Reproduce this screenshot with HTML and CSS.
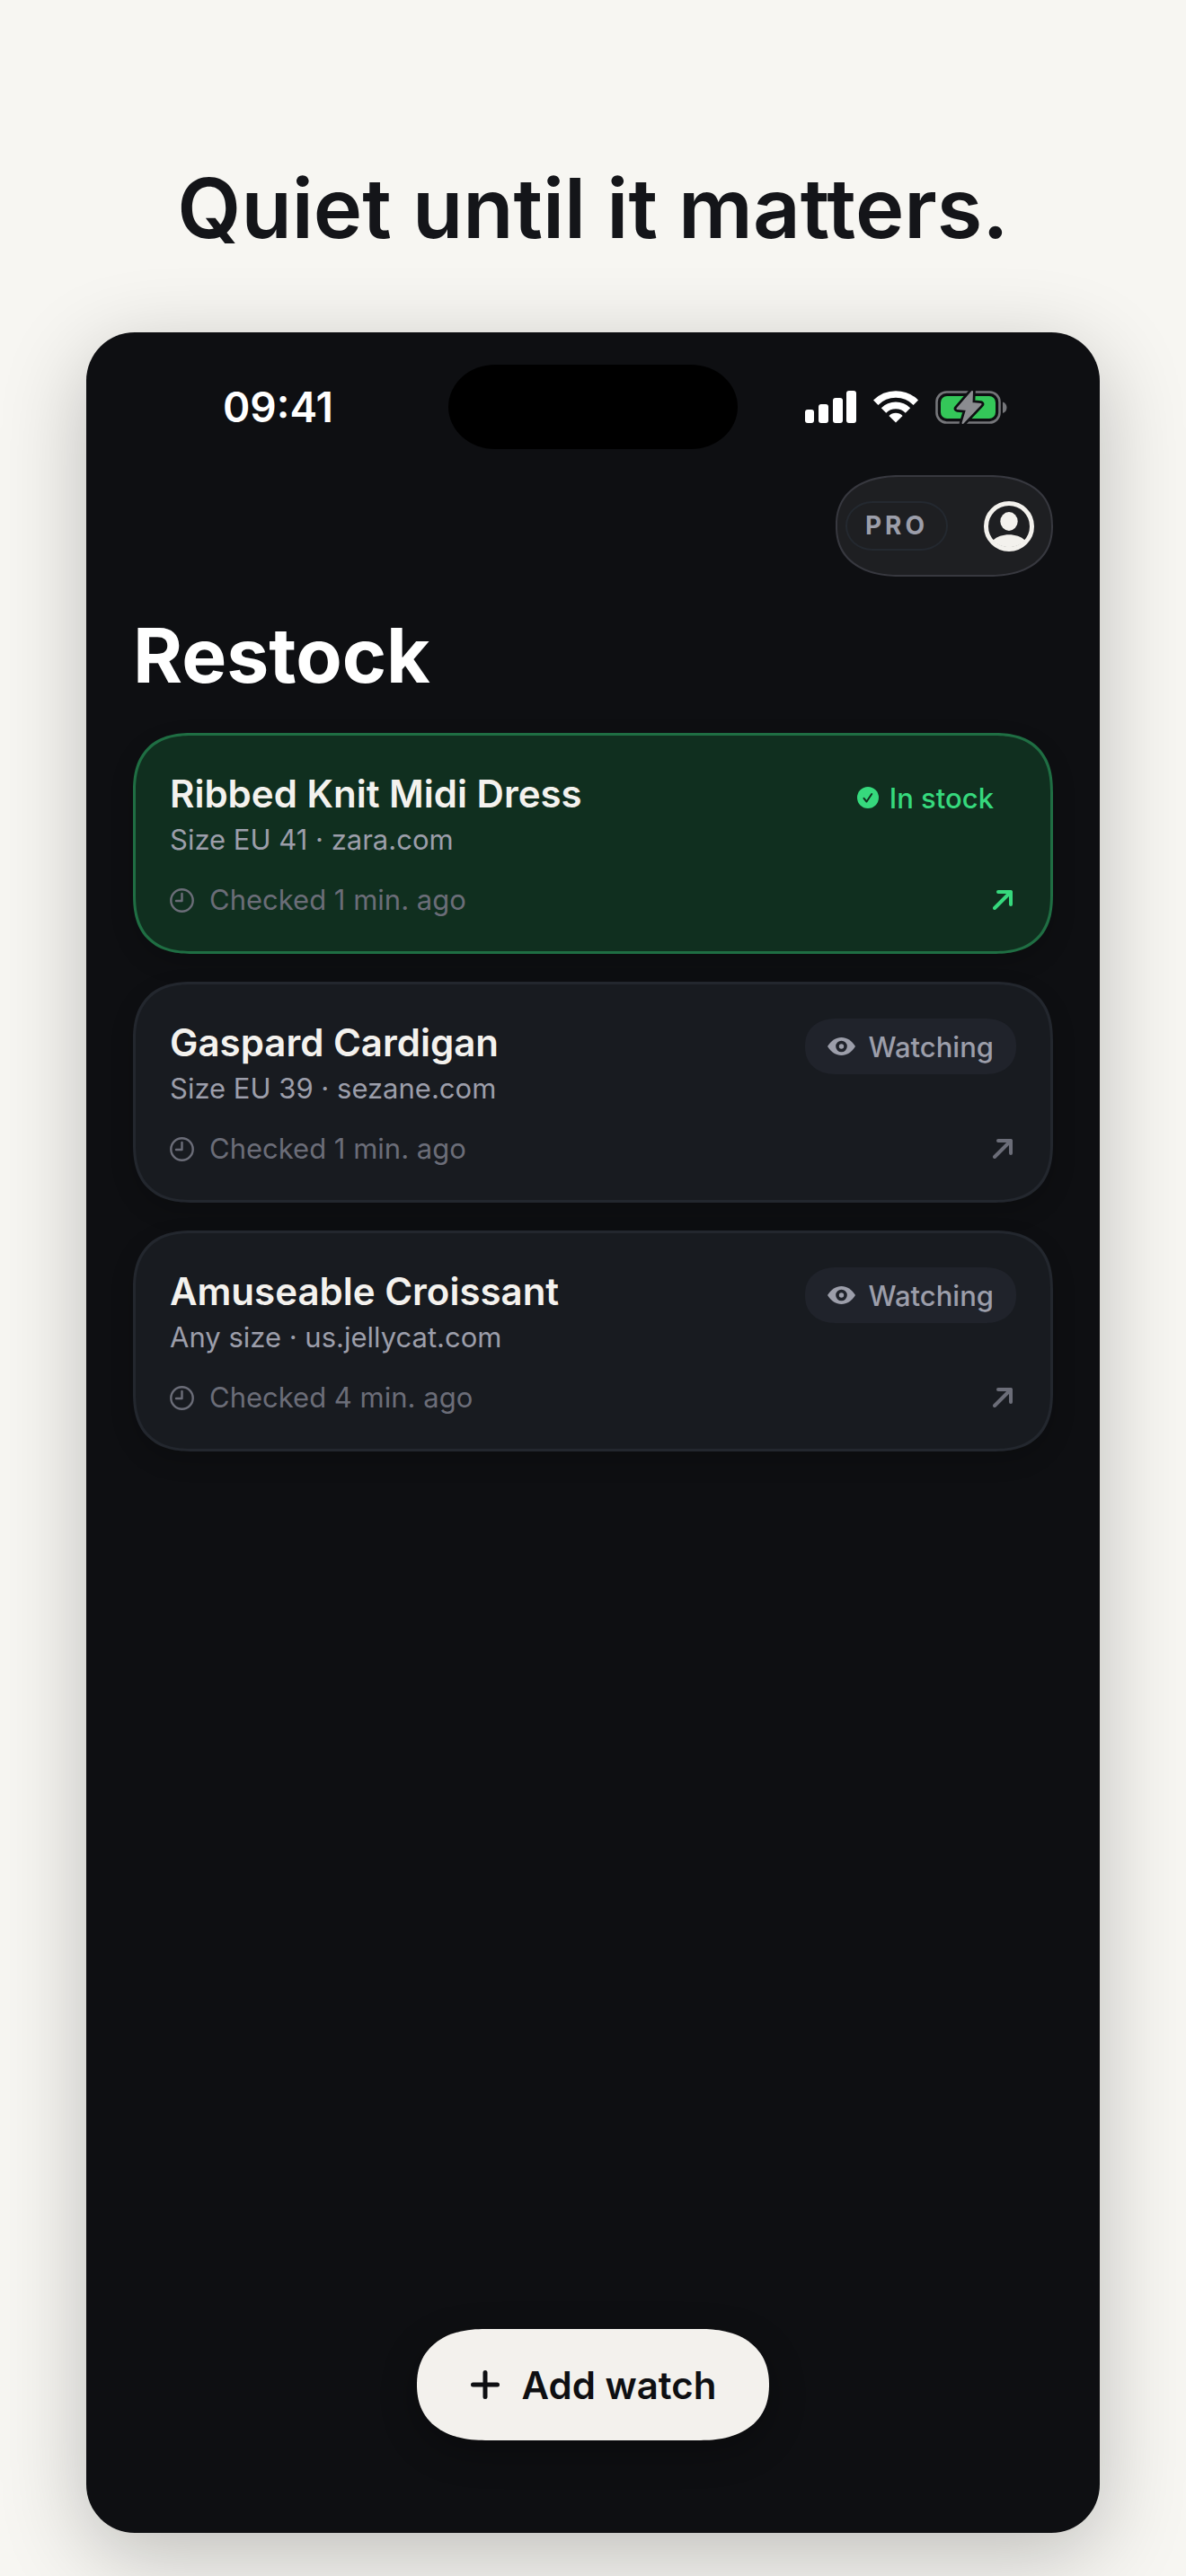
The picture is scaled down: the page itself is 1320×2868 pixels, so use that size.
FILE: index.html
```html
<!DOCTYPE html>
<html lang="en">
<head>
<meta charset="UTF-8">
<meta name="viewport" content="width=device-width, initial-scale=1.0">
<title>Restock</title>
<link rel="stylesheet" href="styles.css">
</head>
<body>
<h1 class="headline">Quiet until it matters.</h1>

<main class="phone">
    <div class="status-bar">
        <div class="time">09:41</div>
        <div class="island"></div>
        <div class="status-icons">
            <svg width="57" height="36" viewBox="0 0 57 36" fill="#fff">
                <rect x="0" y="21" width="10" height="15" rx="3"/>
                <rect x="15" y="15" width="11" height="21" rx="3"/>
                <rect x="31" y="8" width="11" height="28" rx="3"/>
                <rect x="46" y="0" width="11" height="36" rx="3"/>
            </svg>
            <svg width="50" height="36" viewBox="0 0 50 36" fill="none" stroke="#fff" stroke-width="7.7">
                <path d="M2.7 13.2a31.6 31.6 0 0 1 44.6 0"/>
                <path d="M11.5 22a19.1 19.1 0 0 1 27 0"/>
                <path d="M25 35.5l-7.6-7.6a10.7 10.7 0 0 1 15.2 0z" fill="#fff" stroke="none"/>
            </svg>
            <svg width="80" height="37" viewBox="0 0 80 37">
                <rect x="1.5" y="1.5" width="70" height="34" rx="11" fill="none" stroke="#75767a" stroke-width="2.6"/>
                <path d="M75 12.5c6 1.5 6 11 0 12.5z" fill="#75767a"/>
                <rect x="6" y="6" width="61" height="25" rx="7" fill="#34c759"/>
                <path d="M41 1L24.500 20l10.500 1L30.500 36 50.500 15l-10-1z" fill="#0e0f12" stroke="#0e0f12" stroke-width="7.5" stroke-linejoin="round"/>
                <path d="M41 1L24.500 20l10.500 1L30.500 36 50.500 15l-10-1z" fill="#8b8c90" stroke="#8b8c90" stroke-width="2" stroke-linejoin="round"/>
            </svg>
        </div>
    </div>

    <div class="toolbar">
        <div class="account">
            <span class="pro">PRO</span>
            <button class="avatar" aria-label="Account">
                <svg width="56" height="56" viewBox="0 0 56 56">
                    <circle cx="28" cy="28" r="25.5" fill="none" stroke="#f3f1ed" stroke-width="5"/>
                    <ellipse cx="28" cy="22.5" rx="9.7" ry="10.4" fill="#f3f1ed"/>
                    <path d="M10 43.500c9-8.500 27-8.500 36 0a25 25 0 0 1-36 0z" fill="#f3f1ed"/>
                </svg>
            </button>
        </div>
    </div>

    <h2 class="title">Restock</h2>

    <ul class="watches">
        <li class="card card-instock">
            <div class="row">
                <div class="info">
                    <h3>Ribbed Knit Midi Dress</h3>
                    <p>Size EU 41 · zara.com</p>
                </div>
                <span class="badge badge-instock">
                    <svg width="24" height="24" viewBox="0 0 24 24">
                        <circle cx="12" cy="12" r="12" fill="#36d97d"/>
                        <path d="M7.5 12.8l3 3.7 5.7-8.5" fill="none" stroke="#102f1f" stroke-width="2" stroke-linecap="round" stroke-linejoin="round"/>
                    </svg>
                    In stock
                </span>
            </div>
            <div class="row row-bottom">
                <div class="checked">
                    <svg width="27" height="27" viewBox="0 0 27 27" fill="none" stroke="currentColor" stroke-width="2.4" stroke-linecap="round" stroke-linejoin="round">
                        <circle cx="13.5" cy="13.5" r="12.2"/>
                        <path d="M13.5 6v8H7"/>
                    </svg>
                    Checked 1 min. ago
                </div>
                <a class="open" href="#" aria-label="Open Ribbed Knit Midi Dress">
                    <svg width="22" height="22" viewBox="0 0 22 22" fill="none" stroke="currentColor" stroke-width="4" stroke-linecap="round" stroke-linejoin="round">
                        <path d="M2 20L20 2M6 2h14v14"/>
                    </svg>
                </a>
            </div>
        </li>

        <li class="card">
            <div class="row">
                <div class="info">
                    <h3>Gaspard Cardigan</h3>
                    <p>Size EU 39 · sezane.com</p>
                </div>
                <span class="badge">
                    <svg width="31" height="20" viewBox="0 0 31 20">
                        <path d="M0 10C4 3.5 9.5 0 15.5 0S27 3.5 31 10c-4 6.5-9.5 10-15.5 10S4 16.5 0 10z" fill="#9c9eaa"/>
                        <circle cx="15.5" cy="10" r="4.5" fill="#9c9eaa" stroke="#20232b" stroke-width="3.6"/>
                    </svg>
                    Watching
                </span>
            </div>
            <div class="row row-bottom">
                <div class="checked">
                    <svg width="27" height="27" viewBox="0 0 27 27" fill="none" stroke="currentColor" stroke-width="2.4" stroke-linecap="round" stroke-linejoin="round">
                        <circle cx="13.5" cy="13.5" r="12.2"/>
                        <path d="M13.5 6v8H7"/>
                    </svg>
                    Checked 1 min. ago
                </div>
                <a class="open" href="#" aria-label="Open Gaspard Cardigan">
                    <svg width="22" height="22" viewBox="0 0 22 22" fill="none" stroke="currentColor" stroke-width="4" stroke-linecap="round" stroke-linejoin="round">
                        <path d="M2 20L20 2M6 2h14v14"/>
                    </svg>
                </a>
            </div>
        </li>

        <li class="card">
            <div class="row">
                <div class="info">
                    <h3>Amuseable Croissant</h3>
                    <p>Any size · us.jellycat.com</p>
                </div>
                <span class="badge">
                    <svg width="31" height="20" viewBox="0 0 31 20">
                        <path d="M0 10C4 3.5 9.5 0 15.5 0S27 3.5 31 10c-4 6.5-9.5 10-15.5 10S4 16.5 0 10z" fill="#9c9eaa"/>
                        <circle cx="15.5" cy="10" r="4.5" fill="#9c9eaa" stroke="#20232b" stroke-width="3.6"/>
                    </svg>
                    Watching
                </span>
            </div>
            <div class="row row-bottom">
                <div class="checked">
                    <svg width="27" height="27" viewBox="0 0 27 27" fill="none" stroke="currentColor" stroke-width="2.4" stroke-linecap="round" stroke-linejoin="round">
                        <circle cx="13.5" cy="13.5" r="12.2"/>
                        <path d="M13.5 6v8H7"/>
                    </svg>
                    Checked 4 min. ago
                </div>
                <a class="open" href="#" aria-label="Open Amuseable Croissant">
                    <svg width="22" height="22" viewBox="0 0 22 22" fill="none" stroke="currentColor" stroke-width="4" stroke-linecap="round" stroke-linejoin="round">
                        <path d="M2 20L20 2M6 2h14v14"/>
                    </svg>
                </a>
            </div>
        </li>
    </ul>

    <button class="add">
        <svg width="32" height="32" viewBox="0 0 32 32" fill="none" stroke="currentColor" stroke-width="5" stroke-linecap="round">
            <path d="M16 2.5v27M2.5 16h27"/>
        </svg>
        Add watch
    </button>
</main>
</body>
</html>
```
FILE: styles.css
```css
* {
    box-sizing: border-box;
}

body {
    font-family: Inter, "Liberation Sans", sans-serif;
    margin: 0;
    padding: 170px 96px 48px;
    min-height: 100vh;
    display: flex;
    flex-direction: column;
    background-color: #f7f6f2;
}

h1, h2, h3, p, ul {
    margin: 0;
    padding: 0;
}

svg {
    display: block;
    flex: none;
}

button {
    font-family: inherit;
    border: none;
    padding: 0;
    cursor: pointer;
}

.headline {
    font-size: 92px;
    line-height: 124px;
    font-weight: 600;
    text-align: center;
    color: #141519;
    margin-bottom: 76px;
}

.phone {
    flex: 1;
    display: flex;
    flex-direction: column;
    padding: 36px 52px 103px;
    background-color: #0e0f12;
    border-radius: 54px;
    box-shadow: 0 24px 96px rgba(0, 0, 0, 0.24);
}

/* status bar */
.status-bar {
    display: grid;
    grid-template-columns: 1fr 322px 1fr;
    align-items: center;
}

.time {
    padding-right: 28px;
    text-align: center;
    font-size: 46px;
    line-height: 56px;
    font-weight: 600;
    color: #fff;
}

.island {
    height: 94px;
    background-color: #000;
    border-radius: 52px / 47px;
}

.status-icons {
    display: flex;
    gap: 19px;
    padding-left: 75px;
}

/* toolbar */
.toolbar {
    display: flex;
    justify-content: flex-end;
    margin-top: 29px;
}

.account {
    display: flex;
    align-items: center;
    gap: 40px;
    height: 113px;
    padding: 0 19px 0 9px;
    background-color: #1e1f22;
    border: 2px solid #37383f;
    border-radius: 72px / 56px;
    corner-shape: superellipse(1.2);
}

.pro {
    padding: 0 20px;
    border: 2px solid #242930;
    border-radius: 30px / 27px;
    font-size: 28px;
    line-height: 51px;
    font-weight: 700;
    letter-spacing: 4px;
    color: #9c9eaa;
}

.avatar {
    background: none;
}

.title {
    margin: 32px 0 31px;
    font-size: 84px;
    line-height: 111px;
    font-weight: 700;
    color: #fff;
}

/* watch list */
.watches {
    display: flex;
    flex-direction: column;
    gap: 31px;
    list-style: none;
}

.card {
    padding: 38px 38px 37px;
    background-color: #181b20;
    border: 3px solid #23272e;
    border-radius: 66px;
    corner-shape: superellipse(1.3);
    box-shadow: 0 10px 26px rgba(0, 0, 0, 0.18);
}

.card-instock {
    background-color: #102f1f;
    border-color: #1f6e43;
}

.row {
    display: flex;
    justify-content: space-between;
    align-items: flex-start;
}

.row-bottom {
    align-items: center;
    margin-top: 27px;
}

.info h3 {
    font-size: 42px;
    line-height: 54px;
    font-weight: 600;
    color: #f4f2ee;
}

.info p {
    margin-top: 4px;
    font-size: 31px;
    line-height: 40px;
    color: #9c9eaa;
}

.checked {
    display: flex;
    align-items: center;
    gap: 17px;
    font-size: 31px;
    line-height: 40px;
    color: #6b6d78;
}

.badge {
    display: flex;
    align-items: center;
    gap: 15px;
    height: 62px;
    padding: 0 25px;
    border-radius: 36px / 31px;
    corner-shape: superellipse(1.2);
    background-color: #20232b;
    font-size: 31px;
    font-weight: 500;
    color: #9c9eaa;
}

.badge-instock {
    gap: 12px;
    background: none;
    color: #36d97d;
}

.open {
    padding: 4px;
    color: #6b6d78;
}

.card-instock .open {
    color: #36d97d;
}

.add {
    display: flex;
    align-items: center;
    align-self: center;
    gap: 25px;
    height: 124px;
    margin-top: auto;
    padding: 0 59px 0 60px;
    border-radius: 76px / 62px;
    corner-shape: superellipse(1.2);
    background-color: #f3f1ed;
    box-shadow: 0 12px 40px rgba(0, 0, 0, 0.3);
    font-size: 42px;
    font-weight: 600;
    color: #0e0f12;
}
```
